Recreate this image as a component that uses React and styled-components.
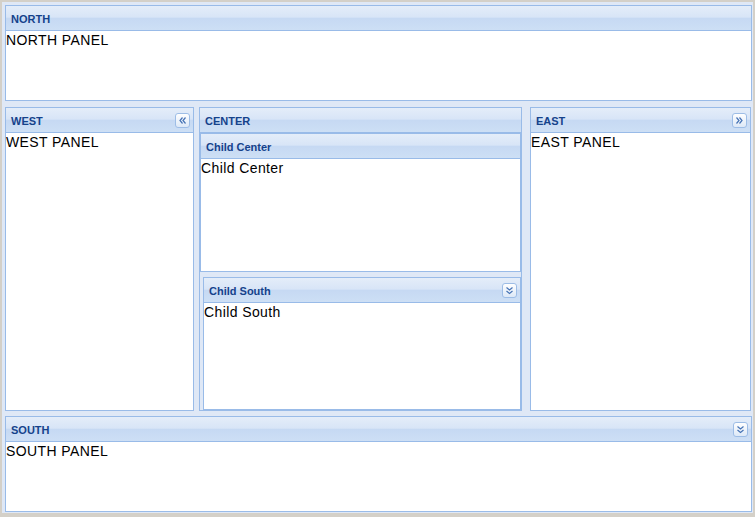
import styled, { createGlobalStyle } from 'styled-components';

const GlobalStyle = createGlobalStyle`
  html, body {
    margin: 0;
    padding: 0;
    background: #d4d0c8;
  }
`;

const Viewport = styled.div`
  margin: 2px 0 0 2px;
  width: 751px;
  height: 511px;
  box-sizing: border-box;
  padding: 3px 1px 1px 3px;
  background: #dfe8f6;
  display: flex;
  flex-direction: column;
`;

const Middle = styled.div`
  display: flex;
  height: 304px;
  margin: 6px 0 5px;
`;

const Panel = styled.div`
  display: flex;
  flex-direction: column;
  box-sizing: border-box;
  width: ${(p) => p.$width || 'auto'};
  height: ${(p) => p.$height || 'auto'};
  flex: ${(p) => p.$flex || 'none'};
  margin: ${(p) => p.$margin || '0'};
`;

const Header = styled.div`
  height: 24px;
  flex: none;
  display: flex;
  align-items: center;
  justify-content: space-between;
  padding: 0 3px 0 5px;
  border: 1px solid #99bbe8;
  background: linear-gradient(
    to bottom,
    #e4edf9 0%,
    #d8e5f7 46%,
    #c6d9f3 52%,
    #cddff5 100%
  );
  color: #15428b;
  font: bold 11px 'Liberation Sans', Arial, sans-serif;
`;

const Title = styled.span`
  padding-top: 1px;
`;

const Body = styled.div`
  flex: 1;
  background: #fff;
  border: 1px solid #99bbe8;
  border-top: 0;
  color: #000;
  font: 14px/17px 'Liberation Sans', Arial, sans-serif;
  letter-spacing: 0.4px;
  padding-top: 1px;
`;

const CenterBody = styled.div`
  flex: 1;
  display: flex;
  flex-direction: column;
  background: #dfe8f6;
  border: 1px solid #99bbe8;
  border-top: 0;
`;

const ToolButton = styled.svg`
  width: 15px;
  height: 15px;
  display: block;
`;

function Tool({ dir }) {
  const paths = {
    left: ['M7.5 4.5 L5 7.5 L7.5 10.5', 'M10.5 4.5 L8 7.5 L10.5 10.5'],
    right: ['M4.5 4.5 L7 7.5 L4.5 10.5', 'M7.5 4.5 L10 7.5 L7.5 10.5'],
    down: ['M4.5 4.5 L7.5 7 L10.5 4.5', 'M4.5 8 L7.5 10.5 L10.5 8'],
  }[dir];
  const id = `tg-${dir}`;
  return (
    <ToolButton viewBox="0 0 15 15">
      <defs>
        <linearGradient id={id} x1="0" y1="0" x2="0" y2="1">
          <stop offset="0" stopColor="#ffffff" />
          <stop offset="1" stopColor="#dce8f7" />
        </linearGradient>
      </defs>
      <rect x="0.5" y="0.5" width="14" height="14" rx="2.5" fill={`url(#${id})`} stroke="#9dbde6" />
      {paths.map((d) => (
        <path key={d} d={d} fill="none" stroke="#4673b5" strokeWidth="1.2" />
      ))}
    </ToolButton>
  );
}

export default function App() {
  return (
    <>
      <GlobalStyle />
      <Viewport>
        <Panel $height="96px">
          <Header><Title>NORTH</Title></Header>
          <Body>NORTH PANEL</Body>
        </Panel>

        <Middle>
          <Panel $width="189px" $margin="0 5px 0 0">
            <Header>
              <Title>WEST</Title>
              <Tool dir="left" />
            </Header>
            <Body>WEST PANEL</Body>
          </Panel>

          <Panel $width="323px" $margin="0 8px 0 0">
            <Header><Title>CENTER</Title></Header>
            <CenterBody>
              <Panel $height="139px">
                <Header><Title>Child Center</Title></Header>
                <Body>Child Center</Body>
              </Panel>
              <Panel $flex="1" $margin="5px 0 0 3px">
                <Header>
                  <Title>Child South</Title>
                  <Tool dir="down" />
                </Header>
                <Body>Child South</Body>
              </Panel>
            </CenterBody>
          </Panel>

          <Panel $width="221px">
            <Header>
              <Title>EAST</Title>
              <Tool dir="right" />
            </Header>
            <Body>EAST PANEL</Body>
          </Panel>
        </Middle>

        <Panel $height="96px">
          <Header>
            <Title>SOUTH</Title>
            <Tool dir="down" />
          </Header>
          <Body>SOUTH PANEL</Body>
        </Panel>
      </Viewport>
    </>
  );
}
